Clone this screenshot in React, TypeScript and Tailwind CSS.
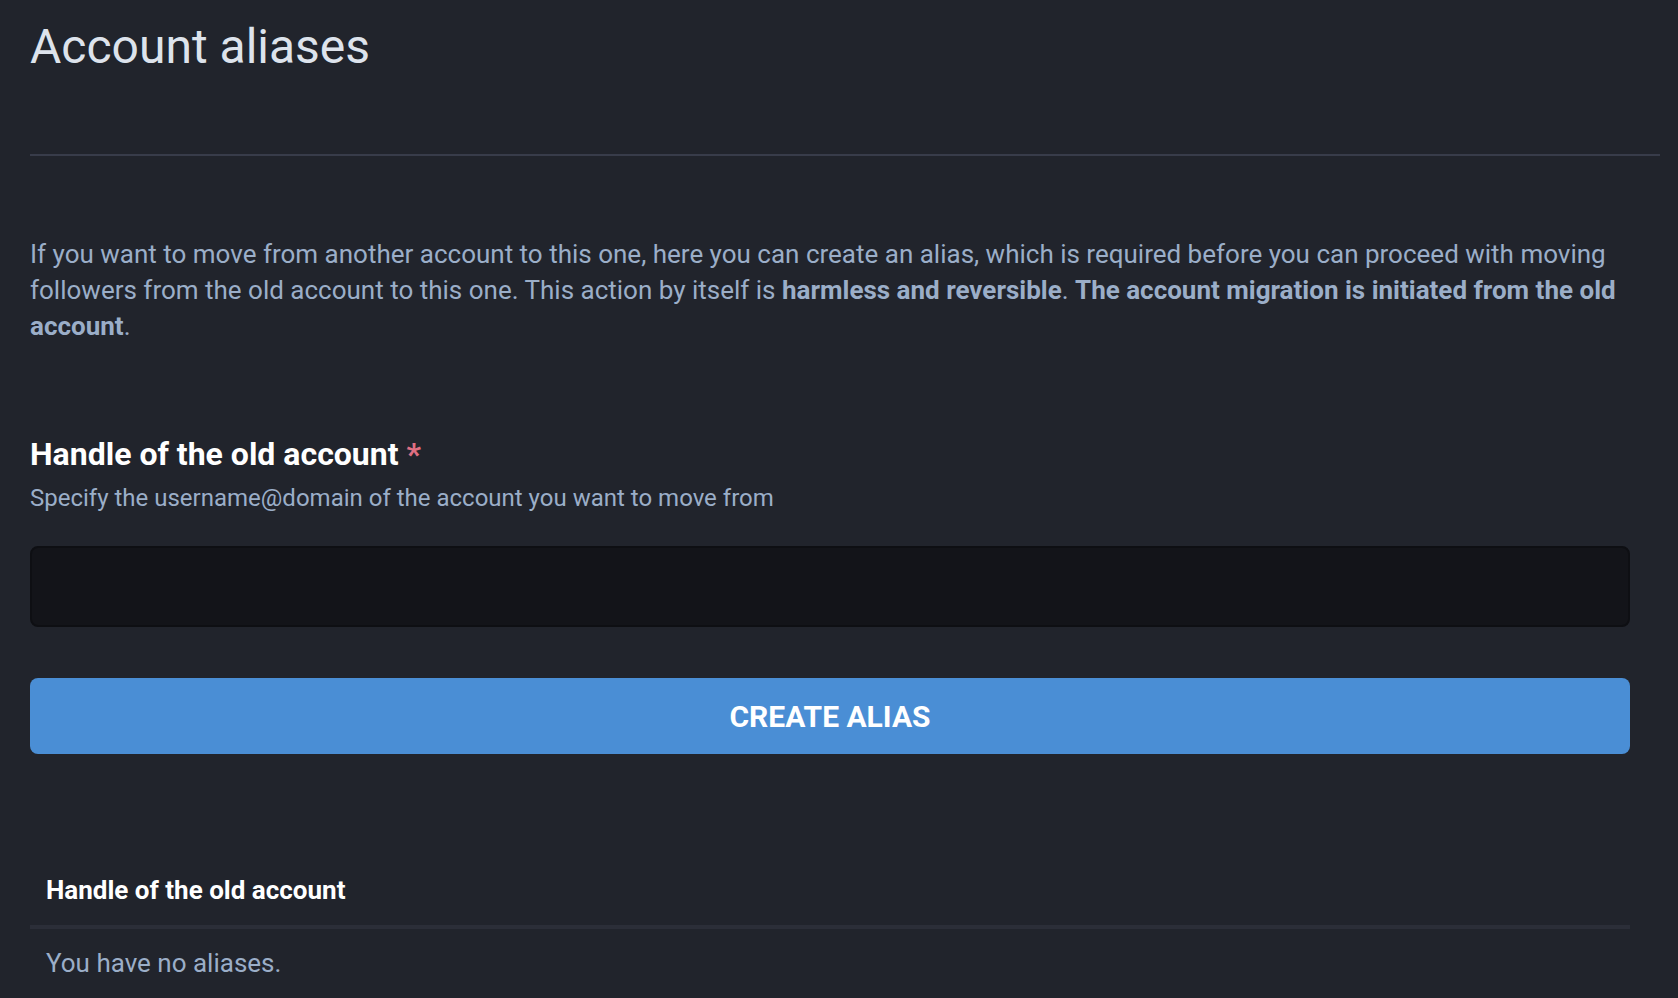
export default function App() {
  return (
    <div
      className="min-h-screen w-full bg-[#21242c] text-[#9baec8]"
      style={{ fontFamily: 'Roboto, "Liberation Sans", sans-serif' }}
    >
      <div className="pl-[30px] pr-[18px] pt-[17px]">
        <h1 className="text-[48px] leading-[60px] font-normal text-[#dde3ec]">Account aliases</h1>
        <div className="mt-[77px] h-[2px] bg-[#383c4a]" />

        <div className="pr-[30px]">
          <p className="mt-[80px] text-[26px] leading-[36px]">
            If you want to move from another account to this one, here you can create an alias, which is required
            before you can proceed with moving followers from the old account to this one. This action by itself is{' '}
            <strong className="font-bold">harmless and reversible</strong>.{' '}
            <strong className="font-bold">The account migration is initiated from the old account</strong>.
          </p>

          <form className="mt-[92px]" onSubmit={(e) => e.preventDefault()}>
            <label className="block text-[32px] leading-[36px] font-bold text-white">
              Handle of the old account <span className="text-[#df6f82]">*</span>
            </label>
            <p className="mt-[10px] text-[24px] leading-[32px]">
              Specify the username@domain of the account you want to move from
            </p>
            <input
              type="text"
              className="mt-[32px] block h-[81px] w-full rounded-lg border-2 border-[#0e0f13] bg-[#131419] px-4 text-[28px] text-white outline-none"
            />
            <button
              type="submit"
              className="mt-[51px] flex h-[76px] w-full items-center justify-center rounded-lg bg-[#4a8ed5] text-[30px] font-bold uppercase text-white"
            >
              Create alias
            </button>
          </form>

          <table className="mt-[102px] w-full border-collapse text-left">
            <thead>
              <tr className="border-b-4 border-[#2b2e38]">
                <th className="px-4 pt-[18px] pb-[19px] text-[26px] leading-[32px] font-bold text-white">
                  Handle of the old account
                </th>
              </tr>
            </thead>
            <tbody>
              <tr>
                <td className="px-4 pt-[16px] pb-[20px] text-[26px] leading-[36px]">You have no aliases.</td>
              </tr>
            </tbody>
          </table>
        </div>
      </div>
    </div>
  );
}
